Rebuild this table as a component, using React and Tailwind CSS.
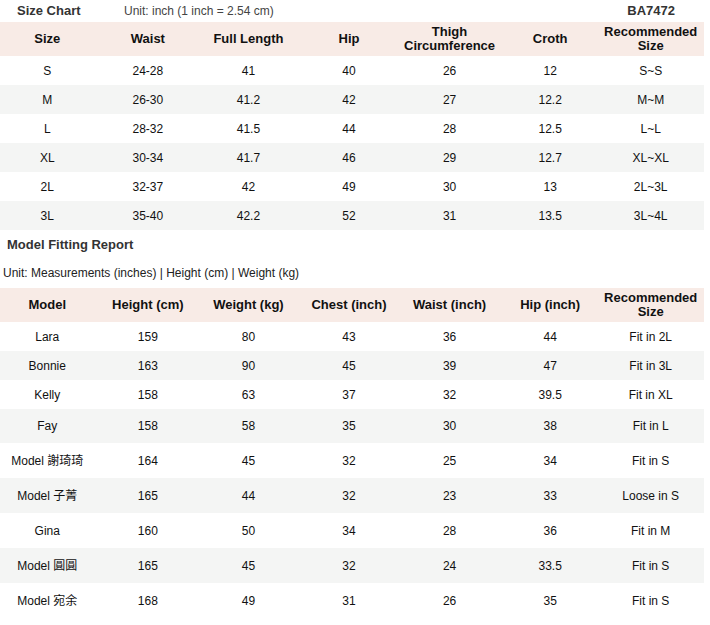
const sizeHead = ['Size', 'Waist', 'Full Length', 'Hip', 'Thigh Circumference', 'Croth', 'Recommended Size'];
const sizeRows = [
  ['S', '24-28', '41', '40', '26', '12', 'S~S'],
  ['M', '26-30', '41.2', '42', '27', '12.2', 'M~M'],
  ['L', '28-32', '41.5', '44', '28', '12.5', 'L~L'],
  ['XL', '30-34', '41.7', '46', '29', '12.7', 'XL~XL'],
  ['2L', '32-37', '42', '49', '30', '13', '2L~3L'],
  ['3L', '35-40', '42.2', '52', '31', '13.5', '3L~4L'],
];

const modelHead = ['Model', 'Height (cm)', 'Weight (kg)', 'Chest (inch)', 'Waist (inch)', 'Hip (inch)', 'Recommended Size'];
const modelRows = [
  { h: 'h-[29px]', c: ['Lara', '159', '80', '43', '36', '44', 'Fit in 2L'] },
  { h: 'h-[29px]', c: ['Bonnie', '163', '90', '45', '39', '47', 'Fit in 3L'] },
  { h: 'h-[29px]', c: ['Kelly', '158', '63', '37', '32', '39.5', 'Fit in XL'] },
  { h: 'h-[34px]', c: ['Fay', '158', '58', '35', '30', '38', 'Fit in L'] },
  { h: 'h-[35px]', c: ['Model 謝琦琦', '164', '45', '32', '25', '34', 'Fit in S'] },
  { h: 'h-[35px]', c: ['Model 子菁', '165', '44', '32', '23', '33', 'Loose in S'] },
  { h: 'h-[35px]', c: ['Gina', '160', '50', '34', '28', '36', 'Fit in M'] },
  { h: 'h-[35px]', c: ['Model 圓圓', '165', '45', '32', '24', '33.5', 'Fit in S'] },
  { h: 'h-[35px]', c: ['Model 宛余', '168', '49', '31', '26', '35', 'Fit in S'] },
];

function Head({ cols }) {
  return (
    <div className="grid grid-cols-7 h-[34px] bg-[#f8ebe6]">
      {cols.map(h => (
        <div key={h} className="flex items-center justify-center text-center pr-[6px] text-[13px] leading-[14px] font-bold text-[#111]">
          {h === 'Thigh Circumference' ? <span>Thigh<br />Circumference</span>
            : h === 'Recommended Size' ? <span>Recommended<br />Size</span> : h}
        </div>
      ))}
    </div>
  );
}

function Row({ cells, i, h = 'h-[29px]' }) {
  return (
    <div className={`grid grid-cols-7 ${h} ${i % 2 ? 'bg-[#f4f5f4]' : 'bg-white'}`}>
      {cells.map((c, j) => (
        <div key={j} className="flex items-center justify-center pr-[6px] text-[12px] text-[#111] whitespace-nowrap">{c}</div>
      ))}
    </div>
  );
}

export default function App() {
  return (
    <div className="w-[710px] h-[625px] bg-white overflow-hidden font-['Liberation_Sans','Noto_Sans_CJK_TC',sans-serif]">
      <div className="w-[704px]">
        <div className="flex items-center h-[22px] text-[#333]">
          <span className="ml-[17px] w-[107px] text-[13px] font-bold">Size Chart</span>
          <span className="text-[12px] text-[#444]">Unit: inch (1 inch = 2.54 cm)</span>
          <span className="ml-auto mr-[29px] text-[13px] font-bold">BA7472</span>
        </div>
        <Head cols={sizeHead} />
        {sizeRows.map((r, i) => <Row key={r[0]} cells={r} i={i} />)}

        <div className="h-[30px] flex items-center pl-[7px] text-[13px] font-bold text-[#333]">Model Fitting Report</div>
        <div className="h-[28px] flex items-center pl-[3px] pb-[2px] text-[12px] text-[#222]">
          Unit: Measurements (inches) | Height (cm) | Weight (kg)
        </div>
        <Head cols={modelHead} />
        {modelRows.map((r, i) => <Row key={r.c[0]} cells={r.c} i={i} h={r.h} />)}
      </div>
    </div>
  );
}
